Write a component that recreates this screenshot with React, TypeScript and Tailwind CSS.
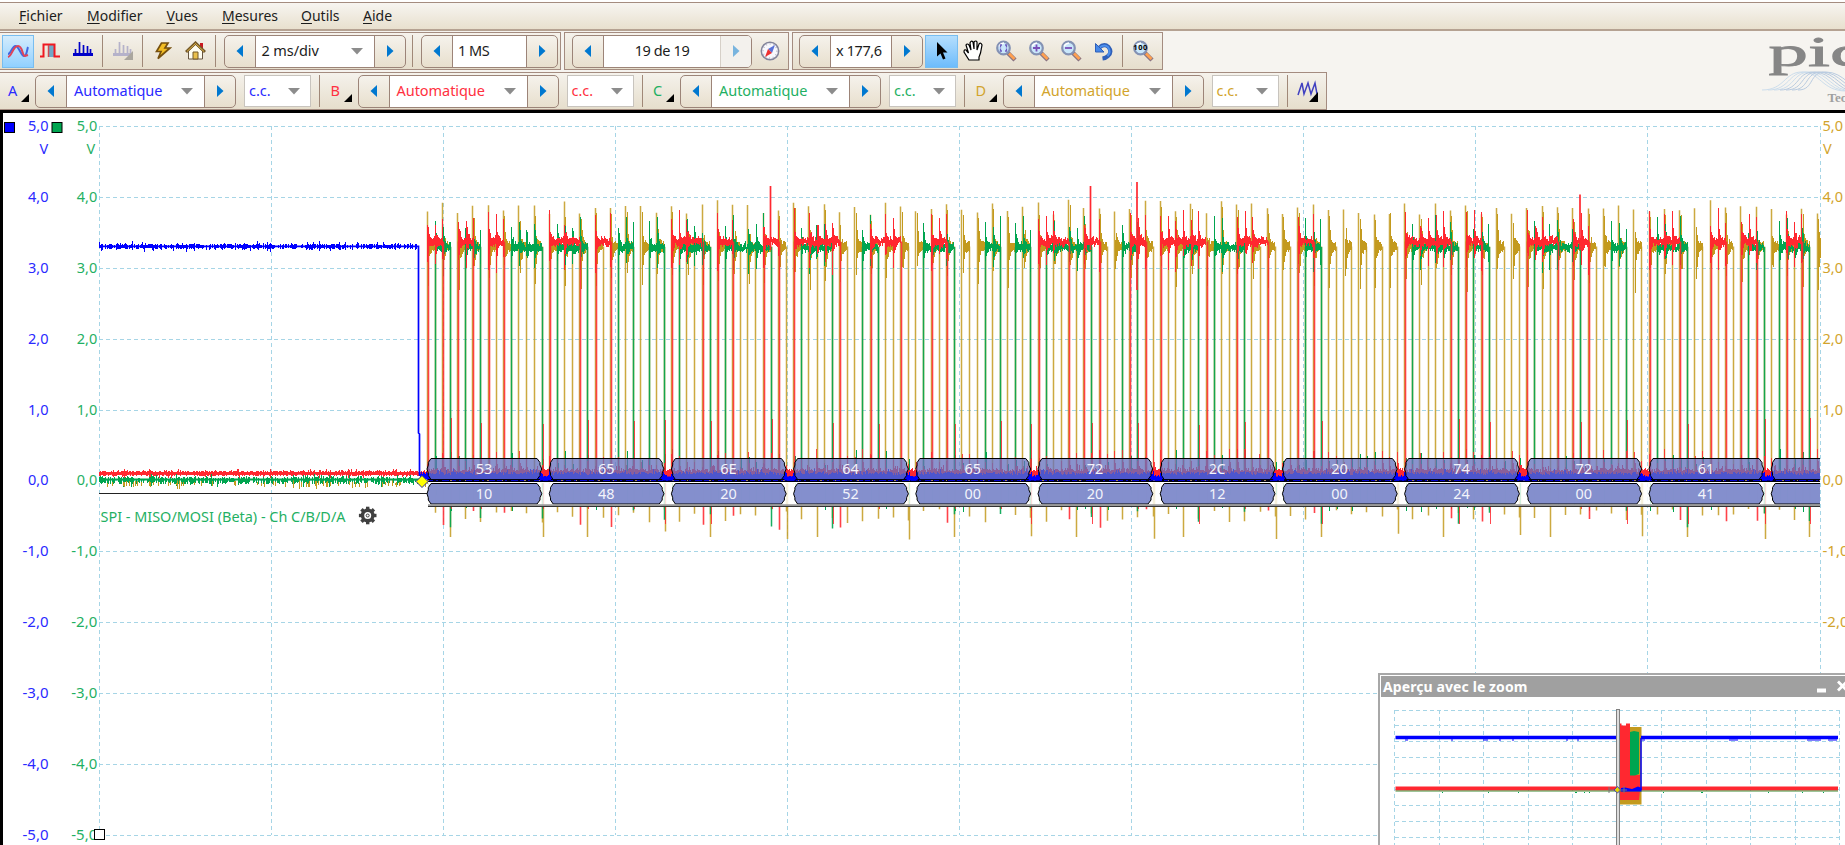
import React from "react";

const BLUE = "#0000ff";
const RED = "#ff2830";
const GREEN = "#00a550";
const GOLD = "#c39a1e";

const PITCH = 122.2;
const BIT = 15.28;
const START = 427;
const END = 1820;
const ZERO = 480.4;
const VOLT = 70.9;
const y = (v: number) => ZERO - v * VOLT;

const mosi = ["53", "65", "6E", "64", "65", "72", "2C", "20", "74", "72", "61", "60"];
const miso = ["10", "48", "20", "52", "00", "20", "12", "00", "24", "00", "41", ""];
const redSlots = [[0, 2, 4], [0, 1, 3], [0, 1, 3, 6], [0, 1, 2, 5, 6], [1], [0, 1, 3, 6], [0, 1, 2, 5, 6], [1], [0, 1, 2, 4], [0, 1, 3], [0, 1, 4, 6], [1]];

function random(seed: number) {
  let s = seed;
  return () => {
    s = (s * 1664525 + 1013904223) % 4294967296;
    return s / 4294967296;
  };
}

type Pulse = [number, number];

function merge(slots: number[], x0: number, shift: number): Pulse[] {
  const out: Pulse[] = [];
  slots.forEach((k) => {
    const a = x0 + (k + shift) * BIT;
    const last = out[out.length - 1];
    if (last && Math.abs(last[1] - a) < 2) last[1] = a + BIT;
    else out.push([a, a + BIT]);
  });
  return out;
}

const redPulses: Pulse[] = redSlots.flatMap((s, i) => merge(s, START + i * PITCH, 0));
const greenPulses: Pulse[] = mosi.flatMap((h, i) => {
  const bits = parseInt(h, 16).toString(2).padStart(8, "0").split("");
  return merge(bits.flatMap((b, k) => (b === "1" ? [k] : [])), START + i * PITCH, -0.5);
});
const clocks = mosi.flatMap((_, i) => Array.from({ length: 8 }, (_u, k) => START + i * PITCH + k * BIT)).filter((x) => x < END);

const seg = (x: number, a: number, b: number) => `M${Math.round(x) + 0.5} ${a.toFixed(1)}V${b.toFixed(1)}`;

/* Envelope of a data line while it is high; rings at every clock edge. */
function plateau(p: Pulse, level: number, r: () => number, up: number, down: number) {
  let d = "";
  const end = Math.min(p[1], END);
  let since = 0;
  for (let x = p[0]; x < end; x += 1) {
    const near = clocks.some((c) => Math.abs(c - x) < 0.5 || (r() > 0.4 && Math.abs(c + 7.6 - x) < 0.5));
    since = near || x === p[0] ? 0 : since + 1;
    const e = Math.exp(-since / 1.1);
    const wob = (r() - 0.5) * 0.05;
    d += seg(x, y(level + wob + 0.025 + r() * 0.04 + e * up * (0.5 + r() * 0.7)), y(level + wob - 0.03 - r() * 0.035 - e * down * (0.3 + r() * 0.8)));
  }
  return d;
}

function noise(from: number, to: number, level: number, amp: number, seed: number, density = 1) {
  const r = random(seed);
  let d = "";
  for (let x = from; x < to; x += 1) {
    if (r() > density) continue;
    const big = r() > 0.85 ? 2 : 1;
    d += seg(x, y(level + amp * (0.35 + r() * 0.7 * big)), y(level - amp * (0.35 + r() * 0.7 * big)));
  }
  return d;
}

function dataLine(pulses: Pulse[], level: number, seed: number, up: number, down: number, lag: number) {
  const r = random(seed);
  let tops = "";
  let edges = "";
  pulses.forEach((p) => {
    if (p[0] > END) return;
    tops += plateau(p, level, r, up, down);
    edges += seg(p[0] + lag, y(level), y(0));
    if (p[1] < END) edges += seg(p[1] + lag, y(level), y(-0.3 - r() * 0.4));
  });
  return { tops, edges };
}

const redLine = dataLine(redPulses, 3.37, 21, 0.34, 0.38, 0.6);
const greenLine = dataLine(greenPulses, 3.29, 77, 0.34, 0.3, 0);

const clockLine = (() => {
  const r = random(5);
  let edges = "";
  let tops = "";
  clocks.forEach((c) => {
    const peak = 3.74 + r() * 0.22;
    const fall = c + BIT / 2;
    edges += seg(c - 0.4, y(peak), y(-0.05));
    for (let x = c; x < Math.min(c + 7, END); x += 1) {
      const e = Math.exp(-(x - c) / 1.2);
      tops += seg(x + 1, y(3.31 + 0.02 + r() * 0.05 + e * 0.42 * r()), y(3.27 - r() * 0.04 - e * 0.4 * (0.5 + r())));
    }
    if (r() > 0.5) tops += seg(c + 1, y(peak - 0.08), y(3.3));
    if (fall < END) edges += seg(fall, y(3.3), y(-0.4 - r() * 0.2));
  });
  for (let i = 0; i < 12; i++) {
    const x = START + i * PITCH;
    if (x + 7.5 * BIT + 1 < END) edges += seg(x + 7.5 * BIT + 1, y(0), y(-0.72 - r() * 0.16));
    edges += seg(x + BIT * (i % 3 === 0 ? 1.5 : 2.5), y(0), y(-0.8));
  }
  return { edges, tops };
})();

const baseSpikes = (() => {
  const r = random(91);
  let red = "";
  let green = "";
  clocks.forEach((c) => {
    [0, 7.6].forEach((o) => {
      if (c + o > END) return;
      const h = 0.15 + r() * 0.3;
      red += seg(c + o, y(h), y(0)) + seg(c + o + 1, y(h * 0.6), y(0)) + seg(c + o + 2, y(h * 0.4), y(0));
      if (r() > 0.5) green += seg(c + o + 1, y(0.2 + r() * 0.25), y(-0.2 - r() * 0.25));
    });
  });
  greenPulses.forEach((p) => {
    if (p[1] < END) red += seg(p[1] + 1, y(0.78 + r() * 0.1), y(r() > 0.5 ? -0.62 : -0.4));
  });
  return { red, green };
})();

const gaps = mosi.slice(0, 11).map((_, i) => START + i * PITCH + 114);

function Trace({ d, color, width = 1, opacity = 1, soft = false }: { d: string; color: string; width?: number; opacity?: number; soft?: boolean }) {
  return <path d={d} stroke={color} strokeWidth={width} opacity={opacity} fill="none" shapeRendering={soft ? "auto" : "crispEdges"} />;
}

function hex(x: number, top: number, bottom: number) {
  const m = (top + bottom) / 2;
  const a = x;
  const b = x + 114;
  return `M${a} ${m}L${a + 1.3} ${m - 4}L${a + 1.3} ${top + 4}L${a + 4} ${top}H${b - 4}L${b - 1} ${top + 4}V${m - 4}L${b + 0.8} ${m}L${b - 1} ${m + 4}V${bottom - 4}L${b - 4} ${bottom}H${a + 4}L${a + 1.3} ${bottom - 4}V${m + 4}Z`;
}

const volts = [5, 4, 3, 2, 1, 0, -1, -2, -3, -4, -5];

function Scope() {
  const cols = Array.from({ length: 11 }, (_, i) => Math.round(99 + i * 172.05) + 0.5);
  return (
    <svg className="block h-[732px] w-[1845px] font-['Noto_Sans',sans-serif]" viewBox="0 113 1845 732" fill="none">
      <g stroke="#a6d5e6" strokeDasharray="4 3" shapeRendering="crispEdges">
        {cols.map((x) => <path key={x} d={`M${x} 126V835`} />)}
        {volts.map((v) => <path key={v} d={`M99 ${Math.round(y(v)) + 0.5}H1820`} />)}
      </g>
      <g fontSize="14.5">
        {volts.map((v) => {
          const label = `${v},0`;
          const len = v < 0 ? 26 : 20.5;
          const by = y(v) + 5;
          return (
            <g key={v}>
              <text x={48.5 - len} y={by} fill="#2a2aff" textLength={len} lengthAdjust="spacingAndGlyphs">{label}</text>
              <text x={97.3 - len} y={by} fill="#1fb063" textLength={len} lengthAdjust="spacingAndGlyphs">{label}</text>
              {v > -3 && <text x={1822.5} y={by} fill="#d2a42c" textLength={len} lengthAdjust="spacingAndGlyphs">{label}</text>}
            </g>
          );
        })}
        <text x="39.5" y="154" fill="#2a2aff">V</text>
        <text x="86.5" y="154" fill="#1fb063">V</text>
        <text x="1823" y="154" fill="#d2a42c">V</text>
      </g>
      <rect x="4.5" y="122.5" width="10" height="10" fill="#0000ff" stroke="#000" />
      <rect x="52" y="122.5" width="10" height="10" fill="#00a550" stroke="#000" />
      <rect x="94.5" y="829.5" width="10" height="10" fill="#fff" stroke="#000" />

      <Trace d={noise(99, START, 0.1, 0.04, 8)} color={RED} />
      <path d="M99 473.500H424" stroke={RED} strokeWidth="2.500" />
      <Trace d={noise(99, START, 0, 0.055, 13, 0.75)} color={GREEN} />
      <Trace d={noise(99, START, -0.05, 0.045, 3, 0.22)} color={GOLD} />
      <path d="M99 479.500H424" stroke={GREEN} strokeWidth="2" />

      <Trace d={clockLine.edges} color={GOLD} width={1.5} opacity={0.85} soft />
      <Trace d={clockLine.tops} color={GOLD} />
      <Trace d={greenLine.edges} color={GREEN} width={1.5} opacity={0.9} soft />
      <Trace d={greenLine.tops} color={GREEN} />
      <Trace d={baseSpikes.green} color={GREEN} />
      <Trace d={redLine.edges} color={RED} width={1.6} opacity={0.88} soft />
      <Trace d={redLine.tops} color={RED} />
      <Trace d={baseSpikes.red} color={RED} opacity={0.85} />
      <Trace d={noise(START, END, 0.1, 0.07, 31)} color={RED} />
      <path d="M770.5 186V250M1090.5 186V250M1137 182V290M1580 194.500V250" stroke={RED} strokeWidth="1.700" />
      <Trace d={noise(99, 418, 3.3, 0.042, 41, 0.8)} color={BLUE} />
      <path d={`M99 ${y(3.3)}H418.500V433L419.500 434V476`} stroke={BLUE} strokeWidth="1.700" />
      <Trace d={noise(420, END, 0.06, 0.06, 43)} color={BLUE} />
      <path d="M421 478H1820" stroke={BLUE} strokeWidth="2" />

      <path d="M99 493.500H428" stroke="#222" />
      <rect x="428" y="482" width="1392" height="23" fill="#fff" opacity="0.82" />
      <clipPath id="plot"><path d="M0 113H1820V845H0Z" /></clipPath>
      <g clipPath="url(#plot)">
        {mosi.map((h, i) => {
          const x = START + i * PITCH;
          return (
            <g key={i}>
              <path d={hex(x, 458.500, 479.500)} fill="#6571bd" fillOpacity="0.76" stroke="#000" />
              <path d={hex(x, 483.500, 504)} fill="#7f8acb" fillOpacity="0.96" stroke="#000" />
              {i < 11 && (
                <g fill="#f3f4fb" fontSize="14.500" textAnchor="middle">
                  <text x={x + 57} y="474" textLength="16.500" lengthAdjust="spacingAndGlyphs">{h}</text>
                  <text x={x + 57} y="499" textLength="16.500" lengthAdjust="spacingAndGlyphs">{miso[i]}</text>
                </g>
              )}
            </g>
          );
        })}
        <path d="M428 480.500H1820" stroke="#000010" strokeWidth="3" />
        <path d="M428 480.500H1820" stroke="#0000c8" strokeDasharray="5 3 2 4 7 2" />
        <path d="M428 480.500H1820" stroke="#a08060" strokeDasharray="1 21 2 13" />
        <path d="M428 482.500H1820" stroke="#fff" />
        <path d="M428 505.200H1820" stroke="#9a9a9a" strokeWidth="2" />
        <path d="M428 506.500H1820" stroke="#333" />
        {gaps.map((g) => <Trace key={g} d={noise(g + 2, g + 8, 0.1, 0.06, Math.round(g))} color={RED} />)}
        {gaps.map((g) => <path key={g} d={`M${g - 1} 478.500H${g + 10}`} stroke={BLUE} strokeWidth="4" />)}
      </g>
      <path d="M422 475.500L428 481.500L422 487.500L416 481.500Z" fill="#ffff00" stroke="#2a2a9a" />

      <text x="100.500" y="521.500" fill="#1fb063" fontSize="14.500" textLength="245" lengthAdjust="spacingAndGlyphs">SPI - MISO/MOSI (Beta) - Ch C/B/D/A</text>
      <g transform="translate(367.700 515.500)" stroke="#404040">
        <circle r="5.200" strokeWidth="3.400" />
        <circle r="1.500" strokeWidth="1" />
        {[0, 45, 90, 135, 180, 225, 270, 315].map((a) => <path key={a} transform={`rotate(${a})`} d="M0 -6V-8.800" strokeWidth="3.400" />)}
      </g>
    </svg>
  );
}

function Overview() {
  return (
    <section className="absolute left-[1378px] top-[673px] flex h-[172px] w-[467px] flex-col overflow-hidden border-l-2 border-t-2 border-[#a8a8a8] bg-white pl-px pt-px">
      <header className="flex h-[21px] shrink-0 items-center bg-[#a0a0a0] pl-[2px] font-['Noto_Sans',sans-serif] text-[14px] font-bold text-white">
        <span className="w-[433px] shrink-0 tracking-[0.1px]">Aperçu avec le zoom</span>
        <svg className="h-[20px] w-[32px] shrink-0" viewBox="0 0 32 20" stroke="#fff" fill="none">
          <path d="M1 13.500H10" strokeWidth="4" />
          <path d="M22 4.500L31 13.500M31 4.500L22 13.500" strokeWidth="2.800" />
        </svg>
      </header>
      <svg className="h-[148px] w-[464px] shrink-0" viewBox="1381 697 464 148" fill="none">
        <g stroke="#a6d5e6" strokeDasharray="4 3" shapeRendering="crispEdges">
          {Array.from({ length: 11 }, (_, i) => <path key={i} d={`M${Math.round(1394 + i * 44.500) + 0.5} 710V845`} />)}
          {Array.from({ length: 9 }, (_, i) => <path key={i} d={`M1395 ${Math.round(709.500 + i * 15.900) + 0.5}H1840`} />)}
        </g>
        <rect x="1619" y="727" width="22.500" height="77.500" fill={GOLD} />
        <path d="M1617 723.500H1621.500V725.500H1626V723.500H1630V775H1640V790L1639 800H1617Z" fill={RED} />
        <path d="M1630 732L1634 731L1639 732V774L1635 775.500H1630Z" fill={GREEN} />
        <path d="M1395.500 788.500H1838" stroke={RED} strokeWidth="4" />
        <path d="M1395.500 791H1838" stroke="#3c8c32" />
        <path d="M1395.500 737.500H1617M1641 737.500H1838" stroke={BLUE} strokeWidth="3.500" />
        <path d="M1405 740H1408M1451 740H1453M1483 740H1488M1499 740H1501M1512 740H1514M1566 740H1568M1577 740H1579M1642 740H1645M1729 740H1738M1807 740H1821M1828 740H1837" stroke={BLUE} />
        <path d="M1442 792.500H1443M1488 792.500H1489M1518 792.500H1519M1575 792.500H1577M1584 792.500H1585M1589 792.500H1590M1663 792.500H1664M1701 792.500H1703M1768 792.500H1769M1802 792.500H1803M1823 792.500H1824" stroke={GREEN} />
        <path d="M1641 738V790" stroke={BLUE} strokeWidth="1.500" />
        <path d="M1625 787.500L1632 789L1638 786.500L1641.500 788V791.500H1621V788Z" fill={BLUE} />
        <path d="M1609 787V793M1609 790H1627M1624 786V793" stroke="#777" />
        <rect x="1616.500" y="709.500" width="3" height="140" fill="#ddd" stroke="#808080" />
        <path d="M1617.500 786.500L1620.500 790L1617.500 793L1614 790Z" fill="#e6d800" stroke="#4040c0" />
      </svg>
    </section>
  );
}

function Arrow({ right = false, faded = false }: { right?: boolean; faded?: boolean }) {
  return (
    <svg className={faded ? "h-[12px] w-[8px] opacity-50" : "h-[12px] w-[8px]"} viewBox="0 0 8 12" fill="#0078d0">
      <path d={right ? "M1 0L7.500 6L1 12Z" : "M7 0L0.500 6L7 12Z"} />
    </svg>
  );
}

function Caret() {
  return <svg className="h-[7px] w-[12px] shrink-0" viewBox="0 0 12 7" fill="#8c8c8c"><path d="M0 0H12L6 6.500Z" /></svg>;
}

function Spinner({ text, width, color = "text-[#1c1c1c]", caret = false, faded = false, center = false, spread = "" }: { text: string; width: string; color?: string; caret?: boolean; faded?: boolean; center?: boolean; spread?: string }) {
  return (
    <div className={`flex h-[33px] shrink-0 overflow-hidden rounded-[5px] border border-[#9c8478] bg-gradient-to-b from-[#f5f2ec] to-[#e8dfcd] ${width}`}>
      <span className="flex w-[31px] shrink-0 items-center justify-center border-r border-[#9c8478] pb-px"><Arrow /></span>
      <span className={`flex flex-1 items-center bg-white ${caret ? "justify-between pl-[6px] pr-[11px]" : center ? "justify-center" : "pl-[6px]"} ${color}`}>
        <span className={`whitespace-nowrap pb-[2px] ${spread}`}>{text}</span>
        {caret && <Caret />}
      </span>
      <span className={`flex w-[31px] shrink-0 items-center justify-center border-l pb-px ${faded ? "border-[#d6d0c8] bg-[#f3f1ed]" : "border-[#9c8478]"}`}><Arrow right faded={faded} /></span>
    </div>
  );
}

function Separator({ className }: { className: string }) {
  return <i className={`h-[32px] w-px shrink-0 bg-[#a08878] ${className}`} />;
}

function Slot({ className = "", children }: { className?: string; children: React.ReactNode }) {
  return <span className={`flex h-[33px] shrink-0 items-center justify-center ${className}`}>{children}</span>;
}

function Spectrum({ faded = false }: { faded?: boolean }) {
  return (
    <svg className="h-[20px] w-[22px]" viewBox="0 0 22 20" fill="none">
      <path d="M1 13.500H21" stroke={faded ? "#b5b2ca" : "#0000c8"} strokeWidth="3" />
      <path d="M3.500 8V13M7.500 1V13M11.500 4V13M15.500 5V13M18.500 8V13" stroke={faded ? "#b5b2ca" : "#0000c8"} strokeWidth="1.700" />
      {faded && <path d="M21 10V19H12Z" fill="#aaa69e" />}
    </svg>
  );
}

function Lens({ children }: { children: React.ReactNode }) {
  return (
    <svg className="mb-px h-[22px] w-[22px]" viewBox="0 0 22 22" fill="none">
      <path d="M13 13L20 20" stroke="#8a7480" strokeWidth="4.500" />
      <path d="M14 13.500L19.500 19" stroke="#ffa050" strokeWidth="2.600" />
      <circle cx="8.500" cy="8" r="6.300" fill="#c9e7fb" stroke="#8492b4" strokeWidth="2.200" />
      <path d="M4 6.500Q5 3.500 9 3" stroke="#fff" strokeWidth="1.500" />
      {children}
    </svg>
  );
}

const bar = "flex items-center border-t-[1.5px] border-b-[1.5px] border-r border-[#a48c80] bg-gradient-to-b from-[#f5f2ec] to-[#e6decc]";

function Tools() {
  return (
    <div className="flex h-[39px] gap-[3px] pt-px">
      <div className={`${bar} h-[38px] w-[561px] shrink-0`}>
        <Slot className="ml-[2px] w-[32px] border border-[#78bdf0] bg-gradient-to-b from-[#d4ecfc] to-[#90d0ff]">
          <svg className="h-[18px] w-[22px]" viewBox="0 0 22 18" fill="none" strokeWidth="2">
            <path d="M1 12C4 12 5 4 8.500 4S14 14 17 14S20 7 21 5" stroke="#4068e0" />
            <path d="M1 15C5 14 6 4 11 4S15 14 18 14L21 13" stroke="#e04458" />
          </svg>
        </Slot>
        <Slot className="w-[32px]">
          <svg className="h-[18px] w-[22px]" viewBox="0 0 22 18" fill="none">
            <path d="M9 3H15V15H9Z" fill="#70a8c8" />
            <path d="M1 14.500H4.500V2.500H15.500V14.500H21" stroke="#f01820" strokeWidth="2" />
            <path d="M9.500 3V15" stroke="#d04850" strokeWidth="1.500" />
          </svg>
        </Slot>
        <Slot className="w-[34px]"><Spectrum /></Slot>
        <Separator className="ml-[2px]" />
        <Slot className="w-[39px]"><Spectrum faded /></Slot>
        <Separator className="" />
        <Slot className="w-[39px]">
          <svg className="mb-px h-[20px] w-[18px]" viewBox="0 0 18 20"><path d="M7.500 2H14L11 7H16L4 17.500L7 10.500H2.500Z" fill="#f2bd24" stroke="#76500f" strokeWidth="1.700" /></svg>
        </Slot>
        <Slot className="w-[27px]">
          <svg className="mb-px h-[20px] w-[21px]" viewBox="0 0 21 20">
            <path d="M15 2H18V9H15Z" fill="#c81820" />
            <path d="M3.500 10L10.500 3L17.500 10V18H3.500Z" fill="#fffdf0" stroke="#665540" />
            <path d="M1 11L10.500 2L20 11" fill="none" stroke="#735829" strokeWidth="3" />
            <path d="M2 10.500L10.500 2.500L19 10.500" fill="none" stroke="#e1b545" />
            <path d="M8 11H13V18H8Z" fill="#e9bf4b" stroke="#735829" />
          </svg>
        </Slot>
        <Separator className="ml-[6px]" />
        <div className="w-[8px] shrink-0" />
        <Spinner text="2 ms/div" width="w-[182px]" caret spread="-ml-[0.5px] tracking-[-0.1px]" />
        <Separator className="ml-[6px]" />
        <div className="w-[8px] shrink-0" />
        <Spinner text="1 MS" width="w-[137px]" spread="-ml-px tracking-[-0.5px]" />
      </div>
      <div className={`${bar} h-[38px] w-[225px] shrink-0 border-l pl-[7px]`}>
        <Spinner text="19 de 19" width="w-[180px]" center faded spread="tracking-[-0.4px]" />
        <Slot className="w-[35px]">
          <svg className="h-[20px] w-[20px]" viewBox="0 0 20 20">
            <circle cx="10" cy="10" r="8.700" fill="#f8f8fc" stroke="#83849a" strokeWidth="1.500" />
            <circle cx="10" cy="10" r="7" fill="none" stroke="#b8b8c8" strokeDasharray="1 2.600" strokeWidth="1.500" />
            <path d="M15 4L12 12L8 8Z" fill="#5871d8" /><path d="M5 16L8 8L12 12Z" fill="#ee3030" />
          </svg>
        </Slot>
      </div>
      <div className={`${bar} h-[38px] w-[371px] shrink-0 border-l pl-[6px]`}>
        <Spinner text="x 177,6" width="w-[124px]" spread="-ml-px tracking-[-0.4px]" />
        <Slot className="ml-[2px] w-[33px] border border-[#78bdf0] bg-gradient-to-b from-[#b4defd] to-[#6dbcfb]">
          <svg className="h-[20px] w-[14px]" viewBox="0 0 14 20"><path d="M2 1V15.500L5.500 12.500L8 18.500L10.500 17.500L8 11.500H12.500Z" fill="#000" /></svg>
        </Slot>
        <Slot className="w-[32px]">
          <svg className="h-[22px] w-[22px]" viewBox="0 0 22 22"><path d="M6 20L1 12Q1 9 3 10L5.500 13L3 5Q4 3 6 5L8 10L7 3Q8 0 10 2L11 9V2Q13 0 14 2V10L16 4Q18 2 19 5L17.500 13L16 17V20Z" fill="#fff" stroke="#000" strokeWidth="1.200" /></svg>
        </Slot>
        <Slot className="w-[32px]"><Lens><path d="M7 5H5.500V7.500M10 5H11.500V7.500M5.500 8.500V11H7M11.500 8.500V11H10" stroke="#6c5cc0" strokeWidth="1.300" /></Lens></Slot>
        <Slot className="w-[33px]"><Lens><path d="M5 8H12M8.500 4.500V11.500" stroke="#7a50b8" strokeWidth="1.800" /></Lens></Slot>
        <Slot className="w-[32px]"><Lens><path d="M5 8H12" stroke="#7a50b8" strokeWidth="1.800" /></Lens></Slot>
        <Slot className="w-[33px]">
          <svg className="h-[19px] w-[20px]" viewBox="0 0 20 19" fill="none">
            <path d="M5 6Q10 1 14.500 5Q18.500 10 14 14Q12 16 8.500 16.500" stroke="#2f5fb8" strokeWidth="4" />
            <path d="M5 6Q10 1.500 14 5Q17.500 10 13.500 14" stroke="#4d90ee" strokeWidth="2" />
            <path d="M1.500 1.500V10H10Z" fill="#4688e8" stroke="#2f5fb8" />
          </svg>
        </Slot>
        <Separator className="ml-[2px]" />
        <Slot className="ml-[4px] w-[32px]"><Lens><text x="1.300" y="10" fill="#000" fontSize="7.500" fontWeight="bold" textLength="14" fontFamily="Noto Sans">100</text></Lens></Slot>
      </div>
    </div>
  );
}

function Channel({ name, color }: { name: string; color: string }) {
  return (
    <div className="flex w-[322.5px] shrink-0 items-center">
      <span className={`w-[21px] shrink-0 pb-px pl-[8px] ${color}`}>{name}</span>
      <svg className="mt-[13px] h-[8px] w-[8px] shrink-0" viewBox="0 0 8 8"><path d="M8 0V8H0Z" fill="#000" /></svg>
      <div className="w-[6px] shrink-0" />
      <Spinner text="Automatique" width="w-[201px]" color={color} caret spread="ml-px tracking-[-0.05px]" />
      <span className={`ml-[8px] flex h-[32px] w-[67px] shrink-0 items-center justify-between border border-[#c8c4be] bg-white pl-[4px] pr-[10px] ${color}`}><span className="pb-[2px]">c.c.</span><Caret /></span>
      <Separator className="ml-[8px]" />
    </div>
  );
}

function Logo() {
  return (
    <svg className="absolute right-0 top-[32px] h-[78px] w-[90px]" viewBox="1755 32 90 78" fill="none">
      {Array.from({ length: 7 }, (_, i) => (
        <path key={i} d={`M${1762 + i * 6} 90C${1785 + i * 5} 90 ${1784 + i * 4} 72 ${1802 + i * 4} 72S${1822 + i * 5} 91 ${1846 + i * 3} 91`} stroke={i < 3 ? "#ccddec" : "#b9cbe0"} />
      ))}
      <g fontFamily="Liberation Serif" fill="#868686">
        <text transform="translate(1768.500 65.500) scale(1.880 1)" fontSize="42" stroke="#868686" strokeWidth="0.800">pico</text>
        <text x="1827.500" y="102" fontSize="13" fontWeight="bold" fill="#a0a0a0">Technology</text>
      </g>
    </svg>
  );
}

const menus = [
  { key: "F", rest: "ichier", width: "w-[68px]" },
  { key: "M", rest: "odifier", width: "w-[79.5px]" },
  { key: "V", rest: "ues", width: "w-[55.5px]" },
  { key: "M", rest: "esures", width: "w-[79px]" },
  { key: "O", rest: "utils", width: "w-[62px]" },
  { key: "A", rest: "ide", width: "w-[60px]" },
];

export default function App() {
  return (
    <div className="relative flex h-[845px] w-[1845px] flex-col overflow-hidden bg-[#f6f4f0] font-['Noto_Sans',sans-serif] text-[14.5px] leading-none">
      <div className="h-[2px] shrink-0 bg-white" />
      <nav className="flex h-[29px] shrink-0 items-center border-b-2 border-t border-b-[#b5a292] border-t-[#a48c80] bg-gradient-to-b from-[#f7f5f1] to-[#e8e0ce] pl-[19px] text-[14px] text-[#1c1c1c]">
        {menus.map((m) => (
          <span key={m.rest} className={`shrink-0 ${m.width}`}><u className="underline-offset-2">{m.key}</u>{m.rest}</span>
        ))}
      </nav>
      <Tools />
      <div className="flex h-[40px] shrink-0 pt-[2px]">
        <div className={`${bar} h-[38px] w-[1327px]`}>
          <Channel name="A" color="text-[#2a2aff]" />
          <Channel name="B" color="text-[#ff3040]" />
          <Channel name="C" color="text-[#1fb063]" />
          <Channel name="D" color="text-[#d2a42c]" />
          <Slot className="w-[36px]">
            <svg className="h-[24px] w-[22px]" viewBox="0 0 22 24" fill="none">
              <path d="M1 16L5 4L7 15L11 4L14 15L18 4L20 15" stroke="#4040c0" strokeWidth="1.500" /><path d="M21 13V23H12Z" fill="#000" />
            </svg>
          </Slot>
        </div>
      </div>
      <Logo />
      <main className="flex h-[735px] shrink-0 overflow-hidden border-l-[3px] border-t-[3px] border-black bg-white">
        <div className="-ml-[3px] shrink-0"><Scope /></div>
      </main>
      <Overview />
    </div>
  );
}
